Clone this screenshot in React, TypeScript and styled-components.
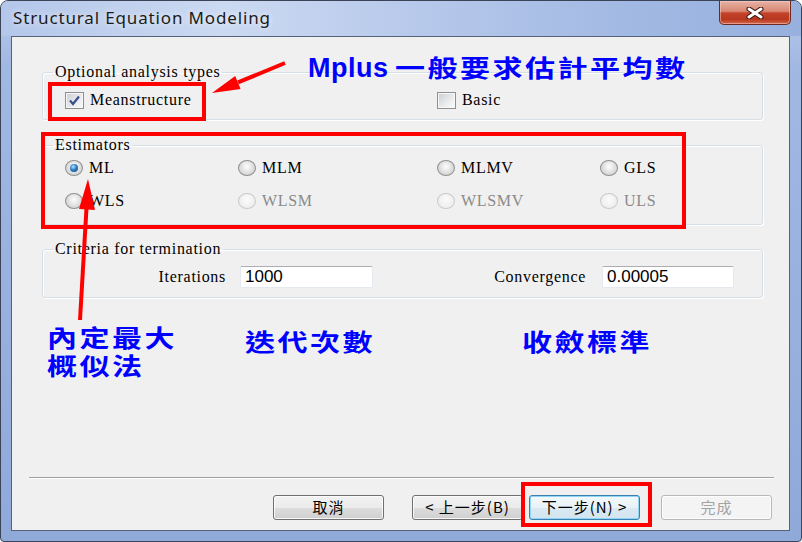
import React from 'react';
import styled, { createGlobalStyle } from 'styled-components';

const SERIF = `"Liberation Serif", "Times New Roman", serif`;
const CJK = `"Noto Sans CJK TC", "Noto Sans CJK SC", sans-serif`;

const GlobalStyle = createGlobalStyle`
  html, body {
    margin: 0;
    padding: 0;
    background: #fff;
  }
  body {
    font-family: ${SERIF};
  }
`;

const Window = styled.div`
  position: relative;
  width: 802px;
  height: 542px;
  box-sizing: border-box;
  border: 1px solid #3b4456;
  border-radius: 8px 8px 4px 4px;
  background: linear-gradient(180deg, #b9cbea 0%, #a1b8e2 12%, #8fa9d9 100%);
  display: flex;
  flex-direction: column;
  overflow: hidden;
`;

const TitleBar = styled.div`
  height: 35px;
  flex-shrink: 0;
  display: flex;
  align-items: flex-start;
  background: linear-gradient(90deg, #b4c7ea 0%, #cbd9f1 28%, #b7c9eb 52%, #a2b9e3 78%, #97b0de 100%);
`;

const Title = styled.div`
  margin: 7px 0 0 12px;
  font: 17px/20px "Noto Sans", "Open Sans", sans-serif;
  letter-spacing: 0.85px;
  color: #1b1b1b;
  text-shadow: 0 0 6px rgba(255, 255, 255, 0.9);
`;

const CloseButton = styled.div`
  margin: 0 10px 0 auto;
  width: 72px;
  height: 24px;
  box-sizing: border-box;
  border: 1px solid #6b2b22;
  border-top: none;
  border-radius: 0 0 5px 5px;
  background: linear-gradient(180deg, #e6b3a6 0%, #d88672 45%, #c4432a 52%, #b8381f 80%, #d4674c 100%);
  box-shadow: inset 0 0 0 1px rgba(255, 210, 200, 0.5);
  display: flex;
  align-items: center;
  justify-content: center;
`;

const Client = styled.div`
  flex: 1;
  margin: 0 11px 10px 10px;
  border: 1px solid #55627a;
  background: #f0f0f0;
  display: flex;
  flex-direction: column;
`;

const Body = styled.div`
  padding: 0 26px 0 30px;
`;

const Group = styled.fieldset<{ $top: number; $pt: number; $pb: number }>`
  margin: ${p => p.$top}px 0 0;
  padding: ${p => p.$pt}px 12px ${p => p.$pb}px 22px;
  border: 1px solid #d5dfe5;
  border-radius: 3px;
  box-shadow: inset 1px 1px 0 #fff, 1px 1px 0 #fff;
  min-width: 0;
`;

const Legend = styled.legend`
  margin-left: -12px;
  padding: 0 2px;
  font: 16px/18px ${SERIF};
  letter-spacing: 0.7px;
  color: #000;
`;

const OptionGrid = styled.div<{ $cols: string }>`
  display: grid;
  grid-template-columns: ${p => p.$cols};
  row-gap: 13px;
`;

const Option = styled.label<{ $disabled?: boolean }>`
  display: flex;
  align-items: center;
  gap: 6px;
  height: 20px;
  font: 16px/20px ${SERIF};
  letter-spacing: 0.7px;
  color: ${p => (p.$disabled ? '#8a8a8a' : '#000')};
`;

const Box = styled.span`
  width: 19px;
  height: 17px;
  box-sizing: border-box;
  border: 1px solid #8e8f8f;
  background: linear-gradient(135deg, #c9cdd3 0%, #e9eaec 55%, #fbfbfb 100%);
  box-shadow: inset 0 0 0 1px #f7f7f7;
  display: flex;
  align-items: center;
  justify-content: center;
`;

const RadioDot = styled.span<{ $checked?: boolean; $disabled?: boolean }>`
  position: relative;
  width: 18px;
  height: 16px;
  box-sizing: border-box;
  border-radius: 50%;
  border: 1px solid ${p => (p.$disabled ? '#cacaca' : '#8e8f8f')};
  background: ${p =>
    p.$disabled
      ? 'radial-gradient(ellipse at 50% 40%, #fbfbfb 0%, #eeeeee 70%, #e4e4e4 100%)'
      : 'radial-gradient(ellipse at 50% 40%, #fdfdfd 0%, #e4e4e4 45%, #c3c3c3 100%)'};
  &::after {
    content: '';
    display: ${p => (p.$checked ? 'block' : 'none')};
    position: absolute;
    left: 4px;
    top: 3px;
    width: 8px;
    height: 8px;
    border-radius: 50%;
    background: radial-gradient(circle at 40% 35%, #b5e3fc 0%, #2f7dc2 45%, #0b3a6d 100%);
  }
`;

const FieldRow = styled.div`
  display: flex;
  align-items: center;
  height: 22px;
`;

const FieldLabel = styled.span<{ $w: number; $gap: number }>`
  width: ${p => p.$w}px;
  margin-right: ${p => p.$gap}px;
  text-align: right;
  font: 16px/20px ${SERIF};
  letter-spacing: 0.7px;
  color: #000;
`;

const TextBox = styled.div<{ $w: number }>`
  width: ${p => p.$w}px;
  height: 22px;
  box-sizing: border-box;
  border: 1px solid #e3e9ef;
  border-top-color: #abadb3;
  border-radius: 2px;
  background: #fff;
  padding-left: 4px;
  font: 17px/20px "Liberation Sans", Arial, sans-serif;
  color: #000;
`;

const NoteRow = styled.div`
  display: grid;
  grid-template-columns: 198px 277px auto;
  margin: 25px 0 0 5px;
  align-items: start;
`;

const Note = styled.div<{ $dy?: number }>`
  margin-top: ${p => p.$dy ?? 0}px;
  font: 700 24px/28px ${CJK};
  letter-spacing: 2px;
  color: #0000ff;
  transform: scaleX(1.25);
  transform-origin: left top;
  white-space: pre-line;
`;

const Spacer = styled.div`
  flex: 1;
`;

const Separator = styled.div`
  margin: 0 15px 0 17px;
  border-top: 1px solid #a0a0a0;
  border-bottom: 1px solid #fff;
`;

const ButtonRow = styled.div`
  display: flex;
  justify-content: flex-end;
  padding: 16px 17px 10px 0;
`;

type Variant = 'normal' | 'focus' | 'disabled';

const Button = styled.div<{ $ml: number; $variant?: Variant }>`
  width: 111px;
  height: 25px;
  margin-left: ${p => p.$ml}px;
  box-sizing: border-box;
  padding-bottom: 3px;
  border-radius: 3px;
  display: flex;
  align-items: center;
  justify-content: center;
  font: 15px/1 ${CJK};
  letter-spacing: 1px;
  border: 1px solid
    ${p => (p.$variant === 'focus' ? '#3c7fb1' : p.$variant === 'disabled' ? '#b5b9bc' : '#707070')};
  color: ${p => (p.$variant === 'disabled' ? '#a3a3a3' : '#000')};
  background: ${p =>
    p.$variant === 'disabled'
      ? '#f4f4f4'
      : p.$variant === 'focus'
        ? 'linear-gradient(180deg, #f3f9fc 0%, #e8f2f8 50%, #dbeaf3 51%, #d2e4ef 100%)'
        : 'linear-gradient(180deg, #f2f2f2 0%, #ebebeb 50%, #dddddd 51%, #cfcfcf 100%)'};
  box-shadow: inset 0 0 0 1px
    ${p => (p.$variant === 'focus' ? '#8fd5f5' : 'rgba(255, 255, 255, 0.8)')};
`;

const TopNote = styled.div`
  position: absolute;
  left: 307px;
  top: 51px;
  display: flex;
  align-items: baseline;
  color: #0000ff;
  white-space: nowrap;
`;

const NoteLatin = styled.span`
  font: 700 27px/30px "Liberation Sans", Arial, sans-serif;
  letter-spacing: 0.5px;
`;

const NoteCJK = styled.span`
  display: inline-block;
  margin-left: 6px;
  font: 700 24px/30px ${CJK};
  letter-spacing: 2px;
  transform: scaleX(1.25);
  transform-origin: left center;
`;

const Overlay = styled.svg`
  position: absolute;
  left: -1px;
  top: -1px;
  pointer-events: none;
`;

function CheckBox({ checked }: { checked?: boolean }) {
  return (
    <Box>
      {checked && (
        <svg width="13" height="11" viewBox="0 0 13 11">
          <path d="M2 5.5 L5 9 L11 1.5" fill="none" stroke="#3b4f8c" strokeWidth="2.2" />
        </svg>
      )}
    </Box>
  );
}

function Radio({ label, checked, disabled }: { label: string; checked?: boolean; disabled?: boolean }) {
  return (
    <Option $disabled={disabled}>
      <RadioDot $checked={checked} $disabled={disabled} />
      {label}
    </Option>
  );
}

const estimators = [
  { label: 'ML', checked: true },
  { label: 'MLM' },
  { label: 'MLMV' },
  { label: 'GLS' },
  { label: 'WLS' },
  { label: 'WLSM', disabled: true },
  { label: 'WLSMV', disabled: true },
  { label: 'ULS', disabled: true },
];

export default function App() {
  return (
    <>
      <GlobalStyle />
      <Window>
        <TitleBar>
          <Title>Structural Equation Modeling</Title>
          <CloseButton>
            <svg width="18" height="12" viewBox="0 0 18 12">
              <path d="M3 2 L15 10 M15 2 L3 10" stroke="#3a1410" strokeWidth="5" strokeLinecap="round" />
              <path d="M3 2 L15 10 M15 2 L3 10" stroke="#fff" strokeWidth="3" strokeLinecap="round" />
            </svg>
          </CloseButton>
        </TitleBar>
        <Client>
          <Body>
            <Group $top={26} $pt={9} $pb={9}>
              <Legend>Optional analysis types</Legend>
              <OptionGrid $cols="372px auto">
                <Option>
                  <CheckBox checked />
                  Meanstructure
                </Option>
                <Option>
                  <CheckBox />
                  Basic
                </Option>
              </OptionGrid>
            </Group>
            <Group $top={16} $pt={4} $pb={13}>
              <Legend>Estimators</Legend>
              <OptionGrid $cols="173px 199px 163px auto">
                {estimators.map(e => (
                  <Radio key={e.label} label={e.label} checked={e.checked} disabled={e.disabled} />
                ))}
              </OptionGrid>
            </Group>
            <Group $top={15} $pt={8} $pb={9}>
              <Legend>Criteria for termination</Legend>
              <FieldRow>
                <FieldLabel $w={161} $gap={14}>Iterations</FieldLabel>
                <TextBox $w={133}>1000</TextBox>
                <FieldLabel $w={213} $gap={16}>Convergence</FieldLabel>
                <TextBox $w={132}>0.00005</TextBox>
              </FieldRow>
            </Group>
            <NoteRow>
              <Note>{'內定最大\n概似法'}</Note>
              <Note $dy={4}>迭代次數</Note>
              <Note $dy={4}>收斂標準</Note>
            </NoteRow>
          </Body>
          <Spacer />
          <Separator />
          <ButtonRow>
            <Button $ml={0}>取消</Button>
            <Button $ml={28}>&lt; 上一步(B)</Button>
            <Button $ml={6} $variant="focus">下一步(N) &gt;</Button>
            <Button $ml={21} $variant="disabled">完成</Button>
          </ButtonRow>
        </Client>
        <TopNote>
          <NoteLatin>Mplus</NoteLatin>
          <NoteCJK>一般要求估計平均數</NoteCJK>
        </TopNote>
        <Overlay width="802" height="542" viewBox="0 0 802 542">
          <g fill="none" stroke="#ff0000" strokeWidth="4">
            <rect x="50" y="84" width="154" height="35" />
            <rect x="43" y="134" width="641" height="93" />
            <rect x="523" y="484" width="127" height="41" />
            <line x1="285" y1="63" x2="238" y2="82.4" />
            <line x1="80" y1="320" x2="86.5" y2="208" />
          </g>
          <g fill="#ff0000">
            <polygon points="212,93 240.6,88.9 235.2,75.9" />
            <polygon points="88,179 95,210 79,209" />
          </g>
        </Overlay>
      </Window>
    </>
  );
}
